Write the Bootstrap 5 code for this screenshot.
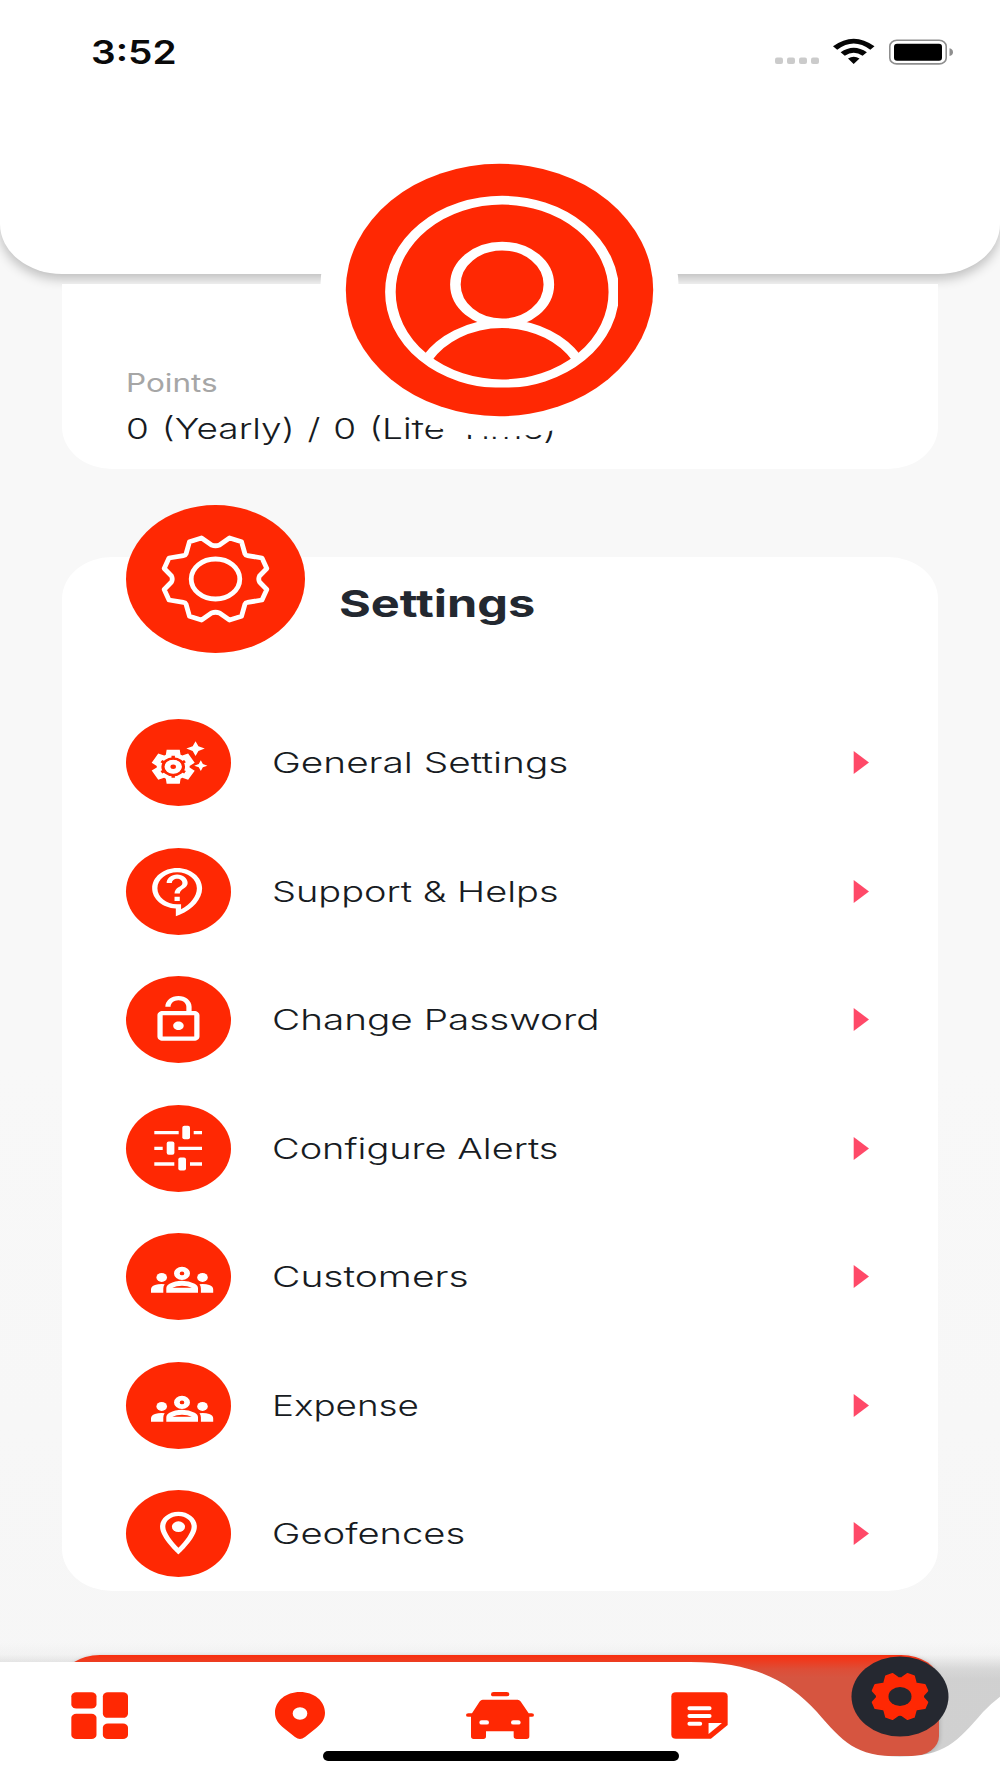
<!DOCTYPE html>
<html lang="en">
<head>
<meta charset="utf-8">
<meta name="viewport" content="width=device-width, initial-scale=1">
<title>Settings</title>
<link href="https://cdn.jsdelivr.net/npm/bootstrap@5.3.0/dist/css/bootstrap.min.css" rel="stylesheet">
<style>
  :root { --brand: #ff2803; --ink: #171b22; }
  body { background: #f8f8f8; font-family: Inter, "Open Sans", sans-serif; color: var(--ink); }
  .screen { width: 1000px; height: 1778px; background: linear-gradient(#f8f8f8, #f8f8f8 60%, #f6f6f6); }
  .topbar { height: 274px; border-radius: 0 0 62px 62px / 0 0 50px 50px; box-shadow: 0 5px 12px rgba(0,0,0,.24); padding: 36px 47px 0 91px; }
  .clock { font-size: 32px; font-weight: 600; line-height: 32px; margin-top: 1px; color: #0a0a0a; }
  .stretch { display: inline-block; white-space: nowrap; transform-origin: left center; }
  .avatar { left: 320px; top: 142.5px; width: 359px; height: 294px; z-index: 2; }
  .panel { margin: 0 62px 0 61.5px; padding: 0 64.5px; background: #fff; }
  .points-panel { position: relative; height: 184.5px; margin-top: 10px; padding-top: 83px; border-radius: 0 0 50px 50px / 0 0 42px 42px; }
  .points-title { font-size: 25px; line-height: 32px; color: #a6a6a6; }
  .points-value { font-size: 29px; font-weight: 300; line-height: 36px; margin-top: 12px; word-spacing: 2px; }
  .settings-panel { height: 1034px; margin-top: 88.5px; border-radius: 50px / 42px; }
  .panel-head { height: 118.5px; margin-bottom: 43.5px; }
  .panel-head svg { margin-top: -52.5px; }
  .panel-title { font-size: 37.5px; font-weight: 700; line-height: 40px; color: #232830; margin: 26.5px 0 0 33.5px; }
  .item { height: 128.5px; padding-right: 4.5px; }
  .item-label { font-size: 28.3px; font-weight: 300; line-height: 36px; margin: 26px 0 0 41px; }
  .disc { flex: none; width: 105px; height: 87px; border-radius: 50%; background: var(--brand); }
  .logout { left: 61.5px; top: 1654.5px; width: 877px; height: 101px; border-radius: 38px / 26px; border-bottom-left-radius: 26px 20px; border-bottom-right-radius: 26px 20px; background: #ff2806; box-shadow: 1px 1px 4px rgba(0,0,0,.22); }
  .tabbar { left: 0; top: 1620px; width: 1000px; height: 158px; z-index: 3; }
  .tabs { height: 158px; padding-top: 71.5px; }
  .tabs .col { padding-right: 1px; }
  .fab { margin-top: -36px; margin-left: 1px; }
  .home-line { left: 322.5px; top: 130.5px; width: 356px; height: 10.5px; border-radius: 6px; background: #000; }
  svg { display: block; }
</style>
</head>
<body>
<div class="screen position-relative overflow-hidden">

  <header class="topbar bg-white d-flex justify-content-between align-items-start">
    <div class="clock"><span class="stretch" data-w="86">3:52</span></div>
    <svg width="180" height="30" viewBox="773 36 180 30">
      <g fill="#cbcbcb"><rect x="775" y="57.5" width="8" height="6.5" rx="2"/><rect x="787" y="57.5" width="8" height="6.5" rx="2"/><rect x="799" y="57.5" width="8" height="6.5" rx="2"/><rect x="811" y="57.5" width="8" height="6.5" rx="2"/></g>
      <path d="M833 46.3Q853.7 31 874.5 46.3L870.3 49.7Q853.7 37.5 837.2 49.7ZM840.6 52.3Q853.7 43 866.9 52.3L862.6 55.7Q853.7 49.7 844.8 55.7ZM848 58.4Q853.7 55 859.5 58.4L853.7 64Z" fill="#050505"/>
      <rect x="889.8" y="40.3" width="56.4" height="23.6" rx="7" ry="6" fill="none" stroke="#8e8e8e" stroke-width="1.6"/>
      <rect x="894" y="43.7" width="48" height="17" rx="3" fill="#000"/>
      <path d="M949.5 48.3q3.5 1 3.5 3.9t-3.5 3.9z" fill="#8e8e8e"/>
    </svg>
  </header>

  <svg class="avatar position-absolute" viewBox="320.5 142.5 359 294">
    <ellipse cx="500" cy="289.5" rx="179.3" ry="147" fill="#fff"/>
    <ellipse cx="500" cy="289.5" rx="153.7" ry="126.2" fill="#ff2803"/>
    <clipPath id="frame"><rect x="380" y="190" width="238.500" height="197"/></clipPath>
    <g clip-path="url(#frame)"><g transform="scale(1.217 1)" fill="none" stroke="#fff" stroke-width="8.7">
      <circle cx="413" cy="291.5" r="91.8"/>
      <circle cx="413" cy="284" r="38.4"/>
      <path d="M351.8 357.5A71.7 71.7 0 0 1 474.2 357.5"/>
    </g></g>
  </svg>

  <section class="panel points-panel">
    <div class="points-title"><span class="stretch" data-w="92">Points</span></div>
    <div class="points-value"><span class="stretch" data-w="430">0 (Yearly) / 0 (Life Time)</span></div>
  </section>

  <main class="panel settings-panel">
    <div class="panel-head d-flex align-items-start">
      <svg width="179" height="148" viewBox="-89.5 -74 179 148">
        <ellipse rx="89.5" ry="74" fill="#ff2803"/>
        <g fill="none" stroke="#fff" stroke-width="4.8" stroke-linejoin="round">
          <path id="cog" d="M4-34 14-41 26-37.3 29.5-25Q30-23.6 32-23.4L46.5-21 51.3-10.5 44-3Q42.5 0 44 3L51.3 10.5 46.5 21 32 23.4Q30 23.6 29.5 25L26 37.3 14 41 4 34Q0 32.500-4 34L-14 41-26 37.300-29.5 25Q-30 23.600-32 23.400L-46.500 21-51.300 10.500-44 3Q-42.500 0-44-3L-51.300-10.500-46.500-21-32-23.400Q-30-23.600-29.500-25L-26-37.300-14-41-4-34Q0-32.500 4-34Z"/>
          <ellipse rx="24.3" ry="20"/>
        </g>
      </svg>
      <h1 class="panel-title"><span class="stretch" data-w="196">Settings</span></h1>
    </div>

    <div>
      <div class="item d-flex align-items-start">
        <svg class="disc" viewBox="0 0 105 87"><g transform="translate(20.9 17.9) scale(2.63 2.13)" fill="#fff">
          <path d="M17.41 6.59 15 5.5l2.41-1.090L18.500 2l1.090 2.410L22 5.500l-2.410 1.090L18.500 9zM21.280 12.720 20.500 11l-.78 1.720L18 13.500l1.720.78L20.500 16l.78-1.720L23 13.500z"/>
          <path d="M16.240 14.370l1.940 1.470-2.500 4.330-2.240-.94c-.2.13-.42.26-.64.37L12.500 22h-5l-.3-2.410c-.22-.11-.43-.23-.64-.37l-2.240.94-2.500-4.330 1.940-1.470c-.01-.25-.01-.49 0-.74l-1.940-1.470 2.500-4.330 2.240.94c.2-.13.42-.26.64-.37L7.500 6h5l.3 2.410c.22.11.43.23.64.37l2.240-.94 2.500 4.330-1.940 1.470c.01.25.01.49 0 .74z"/>
          <circle cx="10" cy="14" r="3.900" fill="none" stroke="#ff2803" stroke-width="1.200"/>
          <path d="M10 8.800V10.500M10 17.500V19.200M5.500 11.400 7 12.300M13 15.700 14.500 16.600M5.500 16.600 7 15.700M13 12.300 14.500 11.400" stroke="#ff2803" stroke-width="1.300"/>
          <circle cx="10" cy="14" r="3.100"/><circle cx="10" cy="14" r="1.050" fill="#ff2803"/>
        </g></svg>
        <div class="item-label"><span class="stretch" data-w="296">General Settings</span></div>
        <svg class="ms-auto mt-4" width="16" height="40" viewBox="0 0 16 40"><path d="M.7 8 16 19.500.700 31z" fill="#ff4968"/></svg>
      </div>
      <div class="item d-flex align-items-start">
        <svg class="disc" viewBox="0 0 105 87"><path transform="translate(20.9 17.9) scale(2.63 2.13)" fill="#fff" d="M11 23.590v-3.600c-5.010-.26-9-4.420-9-9.490C2 5.260 6.260 1 11.500 1S21 5.260 21 10.500c0 4.950-3.440 9.930-8.570 12.400l-1.430.69zM11.500 3C7.360 3 4 6.360 4 10.500S7.360 18 11.500 18H13v2.300c3.640-2.300 6-6.080 6-9.800C19 6.360 15.640 3 11.500 3zm-1 11.500h2v2h-2v-2zm2-1.500h-2c0-3.250 3-3 3-5 0-1.100-.9-2-2-2s-2 .9-2 2h-2c0-2.210 1.790-4 4-4s4 1.790 4 4c0 2.500-3 2.750-3 5z"/></svg>
        <div class="item-label"><span class="stretch" data-w="287">Support &amp; Helps</span></div>
        <svg class="ms-auto mt-4" width="16" height="40" viewBox="0 0 16 40"><path d="M.7 8 16 19.500.700 31z" fill="#ff4968"/></svg>
      </div>
      <div class="item d-flex align-items-start">
        <svg class="disc" viewBox="0 0 105 87"><path transform="translate(20.9 17.9) scale(2.63 2.13)" fill="#fff" d="M18 8h-1V6c0-2.760-2.240-5-5-5S7 3.240 7 6h2c0-1.660 1.340-3 3-3s3 1.340 3 3v2H6c-1.100 0-2 .9-2 2v10c0 1.100.9 2 2 2h12c1.100 0 2-.9 2-2V10c0-1.100-.9-2-2-2zm0 12H6V10h12v10zm-6-3c1.100 0 2-.9 2-2s-.9-2-2-2-2 .9-2 2 .9 2 2 2z"/></svg>
        <div class="item-label"><span class="stretch" data-w="327">Change Password</span></div>
        <svg class="ms-auto mt-4" width="16" height="40" viewBox="0 0 16 40"><path d="M.7 8 16 19.500.700 31z" fill="#ff4968"/></svg>
      </div>
      <div class="item d-flex align-items-start">
        <svg class="disc" viewBox="0 0 105 87">
          <path d="M28.300 27.700H52.700M67.700 27.700H76M28.300 43.300h8.400M52.300 43.300H76M28.300 59h20M64 59h12" stroke="#fff" stroke-width="3.300"/>
          <g fill="#fff"><rect x="56.300" y="20.700" width="7.700" height="13.600" rx="2"/><rect x="40.700" y="36.500" width="7.700" height="13.300" rx="2"/><rect x="52.300" y="52.500" width="7.700" height="13" rx="2"/></g>
        </svg>
        <div class="item-label"><span class="stretch" data-w="287">Configure Alerts</span></div>
        <svg class="ms-auto mt-4" width="16" height="40" viewBox="0 0 16 40"><path d="M.7 8 16 19.500.700 31z" fill="#ff4968"/></svg>
      </div>
      <div class="item d-flex align-items-start">
        <svg class="disc" viewBox="0 0 105 87">
          <g id="people" fill="#fff" fill-rule="evenodd">
            <ellipse cx="35.700" cy="44.400" rx="5.300" ry="4.500"/><ellipse cx="76.500" cy="44.400" rx="5.300" ry="4.500"/>
            <path d="M48 40.400a8 6.600 0 1 1 16 0a8 6.600 0 1 1-16 0zM53.700 40.400a2.300 1.900 0 1 0 4.600 0a2.300 1.900 0 1 0-4.600 0z"/>
            <path d="M40.300 59.700V55.500Q40.300 52.500 43.500 50.800Q49 47.800 56 47.800T68.700 50.800Q72 52.500 72 55.500V59.700ZM46.300 54.800H65.800Q61.500 52.700 56 52.700T46.300 54.800Z"/>
            <path d="M25 59.700V56.500Q25 53.500 29 52.100Q33 50.600 38.700 51.200Q37.300 53 37.300 55.500V59.700ZM87.200 59.700V56.500Q87.200 53.500 83.200 52.100Q79.200 50.600 73.500 51.200Q74.900 53 74.900 55.500V59.700Z"/>
          </g>
        </svg>
        <div class="item-label"><span class="stretch" data-w="197">Customers</span></div>
        <svg class="ms-auto mt-4" width="16" height="40" viewBox="0 0 16 40"><path d="M.7 8 16 19.500.700 31z" fill="#ff4968"/></svg>
      </div>
      <div class="item d-flex align-items-start">
        <svg class="disc" viewBox="0 0 105 87"><use href="#people"/></svg>
        <div class="item-label"><span class="stretch" data-w="147">Expense</span></div>
        <svg class="ms-auto mt-4" width="16" height="40" viewBox="0 0 16 40"><path d="M.7 8 16 19.500.700 31z" fill="#ff4968"/></svg>
      </div>
      <div class="item d-flex align-items-start">
        <svg class="disc" viewBox="0 0 105 87"><g transform="translate(20.9 17.500) scale(2.63 2.13)" fill="#fff"><path d="M12 2C8.130 2 5 5.130 5 9c0 5.250 7 13 7 13s7-7.750 7-13c0-3.870-3.130-7-7-7zM7 9c0-2.760 2.240-5 5-5s5 2.240 5 5c0 2.880-2.880 7.190-5 9.880C9.920 16.210 7 11.850 7 9z"/><circle cx="12" cy="9" r="2.500"/></g></svg>
        <div class="item-label"><span class="stretch" data-w="193">Geofences</span></div>
        <svg class="ms-auto mt-4" width="16" height="40" viewBox="0 0 16 40"><path d="M.7 8 16 19.500.700 31z" fill="#ff4968"/></svg>
      </div>
    </div>
  </main>

  <div class="logout position-absolute"></div>

  <nav class="tabbar position-absolute">
    <svg class="position-absolute top-0 start-0" width="1000" height="158" viewBox="0 1620 1000 158">
      <defs><linearGradient id="veil" x1="0" y1="0" x2="0" y2="1">
        <stop offset="0" stop-color="#999" stop-opacity="0"/><stop offset=".35" stop-color="#999" stop-opacity=".05"/>
        <stop offset=".75" stop-color="#999" stop-opacity=".33"/><stop offset="1" stop-color="#999" stop-opacity=".4"/>
      </linearGradient></defs>
      <rect y="1642" width="1000" height="36" fill="url(#veil)"/>
      <rect y="1678" width="1000" height="100" fill="#999" fill-opacity=".4"/>
      <path fill="#fff" d="M0 1662H690C755 1662 788 1681 817 1712C843 1742 855 1756.500 900 1756.500S957 1742 983 1712Q991 1703.500 1001 1696V1778H0Z"/>
    </svg>
    <div class="tabs row g-0 position-relative">
      <div class="col d-flex justify-content-center"><svg width="57" height="47" viewBox="65 664 170 140" preserveAspectRatio="none" fill="#ff2803"><rect x="66" y="665" width="75" height="48" rx="15" ry="12"/><rect x="160" y="665" width="75" height="76" rx="15" ry="12"/><rect x="66" y="729" width="75" height="75" rx="15" ry="12"/><rect x="160" y="758" width="75" height="46" rx="15" ry="12"/></svg></div>
      <div class="col d-flex justify-content-center"><svg width="50" height="47" viewBox="675 664 150 140" preserveAspectRatio="none"><path fill="#ff2803" fill-rule="evenodd" d="M750 664C792 664 825 690 825 726C825 745 815 759 798 772L765 798Q757 804 750 804T735 798L702 772C685 759 675 745 675 726C675 690 708 664 750 664ZM728 728a22 18.500 0 1 0 44 0a22 18.500 0 1 0-44 0z"/></svg></div>
      <div class="col d-flex justify-content-center"><svg width="68" height="47" viewBox="1248 664 204 140" preserveAspectRatio="none"><path fill="#ff2803" fill-rule="evenodd" d="M1331 664H1370Q1378 664 1378 670.500T1370 677H1331Q1323 677 1323 670.500T1331 664ZM1298 687H1403Q1408 687 1412 692L1436 727H1445Q1452 727 1452 732.500T1445 738H1438V796Q1438 804 1430 804H1400Q1391 804 1391 796V781H1308V796Q1308 804 1300 804H1271Q1263 804 1263 796V738H1255Q1248 738 1248 732.500T1255 727H1266L1289 692Q1293 687 1298 687ZM1295 748Q1288 748 1288 754.500T1295 761H1310Q1317 761 1317 754.500T1310 748ZM1390 748Q1383 748 1383 754.500T1390 761H1405Q1412 761 1412 754.500T1405 748Z"/></svg></div>
      <div class="col d-flex justify-content-center"><svg width="57" height="47" viewBox="515 273 170 141" preserveAspectRatio="none"><path fill="#ff2803" d="M530 274H670Q684 274 684 286V372L634 413H530Q516 413 516 401V286Q516 274 530 274Z"/><path fill="#fff" d="M627 366H667L627 399Z"/><path d="M570 322H630M570 345H630M570 368H602" stroke="#fff" stroke-width="12" stroke-linecap="round"/></svg></div>
      <div class="col d-flex justify-content-center"><svg class="fab" width="98" height="81" viewBox="-49 -40.500 98 81"><ellipse rx="48.500" ry="40" fill="#252830"/><use href="#cog" transform="scale(.53 .545)" fill="#ff2803" stroke="#ff2803" stroke-width="4" stroke-linejoin="round"/><ellipse rx="11.500" ry="9.500" fill="#252830"/></svg></div>
    </div>
    <div class="home-line position-absolute"></div>
  </nav>
</div>
<script src="https://cdn.jsdelivr.net/npm/bootstrap@5.3.0/dist/js/bootstrap.bundle.min.js"></script>
<script>
  // Widen each label to its designed width.
  document.querySelectorAll('.stretch').forEach(function (el) {
    el.style.transform = 'scaleX(' + (el.dataset.w / el.offsetWidth) + ')';
  });
</script>
</body>
</html>
